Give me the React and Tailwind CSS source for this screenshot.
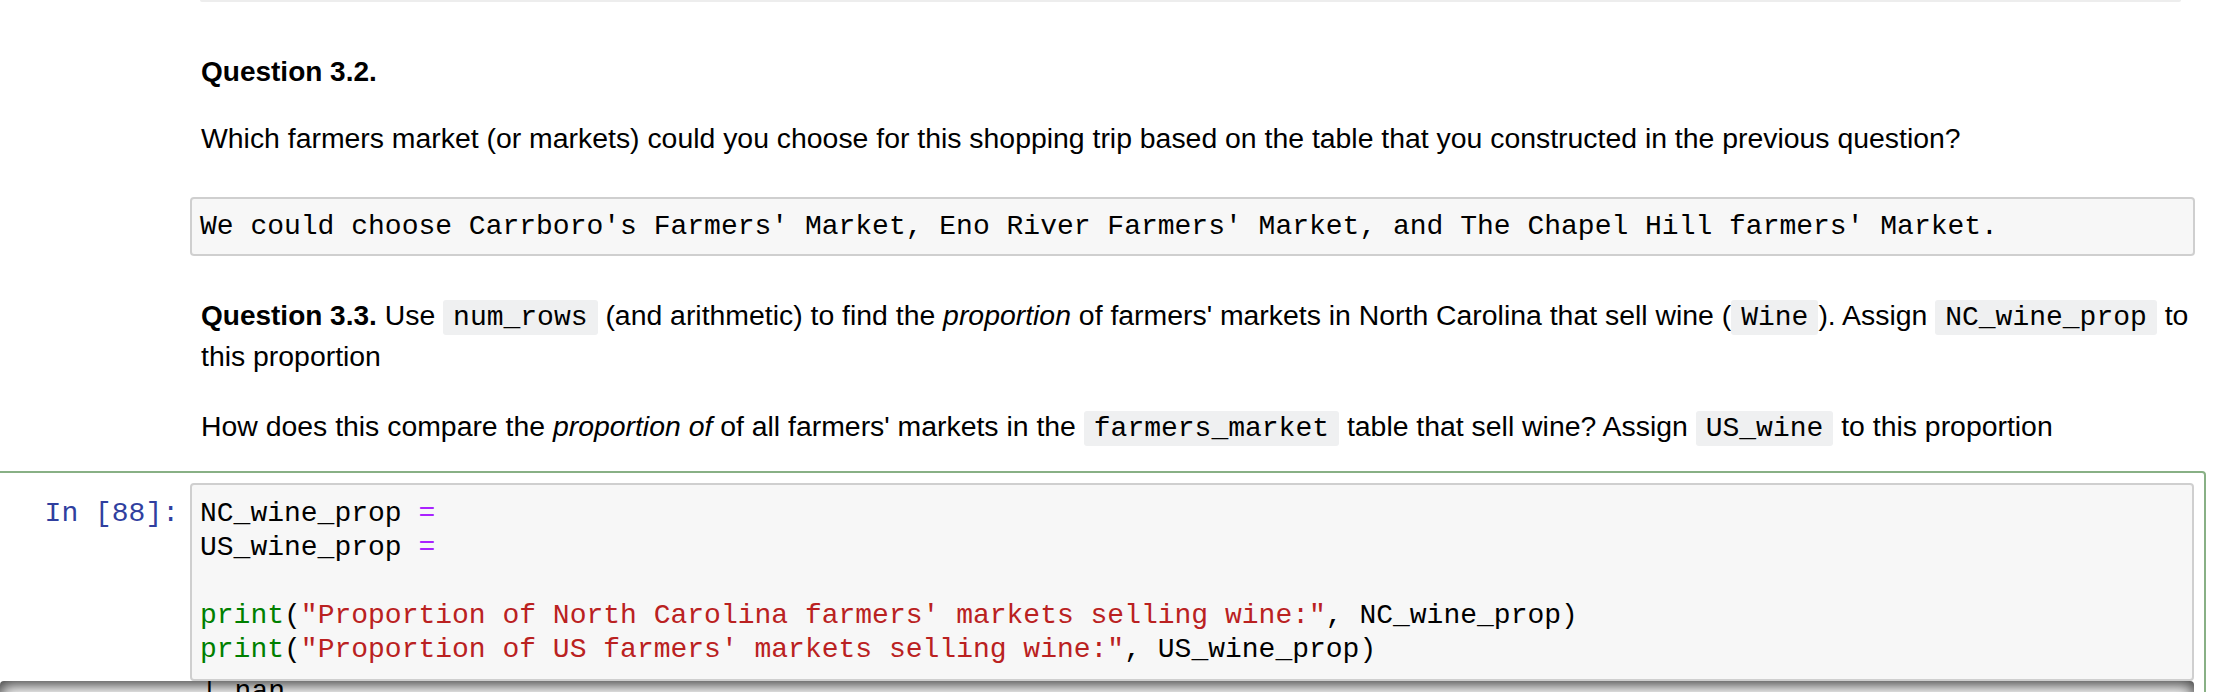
import React from "react";

function C({ children }) {
  return (
    <code className="font-['Liberation_Mono','Courier_New',monospace] text-[28px] leading-[1] bg-[#eff0f1] px-[10px] py-[2px] rounded-[3px] text-black">
      {children}
    </code>
  );
}

export default function App() {
  return (
    <div className="w-[2234px] h-[692px] overflow-hidden bg-white text-black font-['Liberation_Sans',Arial,sans-serif]">
      {/* bottom edge of previous cell */}
      <div className="ml-[200px] w-[1981px] h-[2px] bg-[#ededed] rounded-b-[2px]" />

      {/* markdown cell: Question 3.2 */}
      <div className="pl-[201px] text-[28.4px] leading-[40px]">
        <p className="mt-[50px] font-bold text-[28px]">Question 3.2.</p>
        <p className="mt-[26px] whitespace-nowrap">
          Which farmers market (or markets) could you choose for this shopping trip based on the table that you constructed in the previous question?
        </p>
      </div>

      {/* raw cell */}
      <div className="mt-[39px] ml-[190px] w-[2005px] h-[59px] border-2 border-[#cfcfcf] rounded-[4px] bg-[#f7f7f7] pl-[8px] pt-[10px] font-['Liberation_Mono','Courier_New',monospace] text-[28px] leading-[35px] whitespace-pre">
        We could choose Carrboro's Farmers' Market, Eno River Farmers' Market, and The Chapel Hill farmers' Market.
      </div>

      {/* markdown cell: Question 3.3 */}
      <div className="pl-[201px] text-[28.4px] leading-[40px]">
        <p className="mt-[39px] whitespace-nowrap">
          <b className="font-bold text-[28px]">Question 3.3.</b> Use <C>num_rows</C> (and arithmetic) to find the{" "}
          <i className="italic">proportion</i> of farmers' markets in North Carolina that sell wine (<C>Wine</C>). Assign{" "}
          <C>NC_wine_prop</C> to
          <br />
          this proportion
        </p>
        <p className="mt-[30px] whitespace-nowrap">
          How does this compare the <i className="italic">proportion of</i> of all farmers' markets in the{" "}
          <C>farmers_market</C> table that sell wine? Assign <C>US_wine</C> to this proportion
        </p>
      </div>

      {/* selected code cell */}
      <div className="mt-[25px] ml-[-12px] w-[2218px] border-2 border-[#88b085] rounded-[4px] p-[10px]">
        <div className="flex">
          <div className="w-[190px] shrink-0 text-right pr-[11px] pt-[14px] font-['Liberation_Mono','Courier_New',monospace] text-[28px] leading-[34px] text-[#303F9F] whitespace-pre">
            In [88]:
          </div>
          <div className="flex-1 h-[198px] border-2 border-[#cfcfcf] rounded-[4px] bg-[#f7f7f7] pl-[8px] pt-[12px] font-['Liberation_Mono','Courier_New',monospace] text-[28px] leading-[34px] whitespace-pre">
            <div>
              NC_wine_prop <span className="text-[#AA22FF]">=</span>
            </div>
            <div>
              US_wine_prop <span className="text-[#AA22FF]">=</span>
            </div>
            <div> </div>
            <div>
              <span className="text-[#008000]">print</span>(
              <span className="text-[#BA2121]">"Proportion of North Carolina farmers' markets selling wine:"</span>, NC_wine_prop)
            </div>
            <div>
              <span className="text-[#008000]">print</span>(
              <span className="text-[#BA2121]">"Proportion of US farmers' markets selling wine:"</span>, US_wine_prop)
            </div>
          </div>
        </div>
        {/* scrolled output area */}
        <div className="h-[80px] rounded-[4px] shadow-[inset_0_4px_16px_rgba(0,0,0,0.8)] overflow-hidden flex">
          <div className="w-[201px] shrink-0" />
          <div className="mt-[-6px] font-['Liberation_Mono','Courier_New',monospace] text-[28px] leading-[34px] whitespace-pre">
            | nan
          </div>
        </div>
      </div>
    </div>
  );
}
